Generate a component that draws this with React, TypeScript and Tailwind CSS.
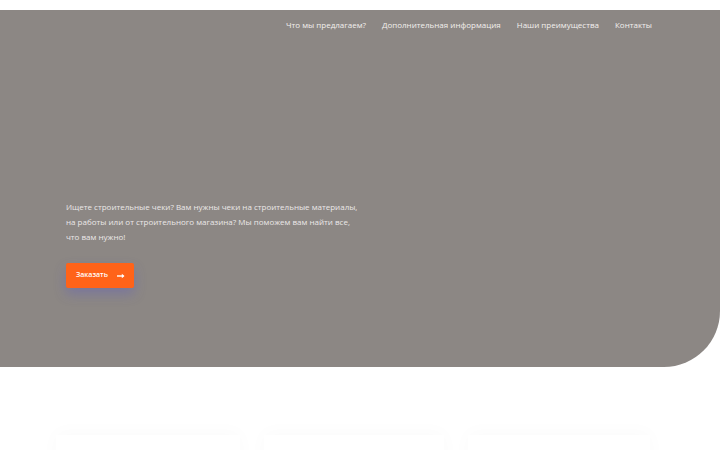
export default function App() {
  const font = { fontFamily: '"Open Sans", "Noto Sans", sans-serif' };
  return (
    <div className="w-[720px] h-[450px] overflow-hidden bg-white" style={font}>
      <div className="h-[10px] bg-white" />
      <section className="h-[357px] bg-[#8c8784] rounded-br-[56px] flex flex-col">
        <nav className="flex justify-end gap-[16px] pr-[68px] pt-[9px] text-[8px] leading-[12px] text-[#f3f0ee]">
          <span>Что мы предлагаем?</span>
          <span>Дополнительная информация</span>
          <span>Наши преимущества</span>
          <span>Контакты</span>
        </nav>
        <div className="pl-[66px] pt-[168px]">
          <p className="text-[8px] leading-[15px] text-[#ebe7e8] whitespace-nowrap">
            Ищете строительные чеки? Вам нужны чеки на строительные материалы,
            <br />
            на работы или от строительного магазина? Мы поможем вам найти все,
            <br />
            что вам нужно!
          </p>
          <button className="mt-[19px] h-[25px] w-[68px] bg-[#ff6319] rounded-[2px] flex items-center pl-[10px] gap-[9px] text-white text-[7px] font-semibold shadow-[0_6px_12px_rgba(90,90,200,0.35)]">
            <span>Заказать</span>
            <svg width="8" height="6" viewBox="0 0 8 6" fill="none">
              <path d="M0 3H6.5" stroke="white" strokeWidth="1.4" />
              <path d="M4.8 0.8L7.5 3L4.8 5.2Z" fill="white" />
            </svg>
          </button>
        </div>
      </section>
      <div className="flex gap-[24px] pl-[56px] pt-[68px]">
        <div className="w-[184px] h-[60px] bg-white shadow-[0_-2px_18px_rgba(0,0,0,0.025)]" />
        <div className="w-[180px] h-[60px] bg-white shadow-[0_-2px_18px_rgba(0,0,0,0.025)]" />
        <div className="w-[182px] h-[60px] bg-white shadow-[0_-2px_18px_rgba(0,0,0,0.025)]" />
      </div>
    </div>
  );
}
